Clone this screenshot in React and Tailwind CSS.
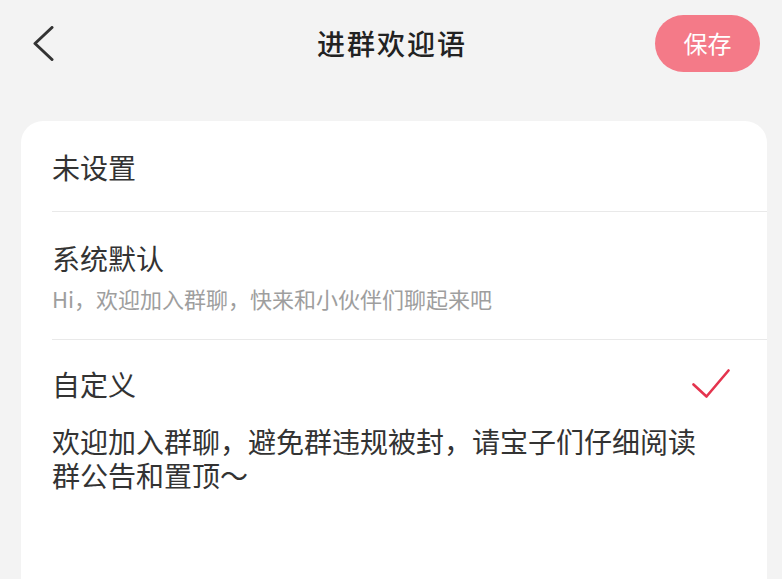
import React from "react";

function App() {
  const font = { fontFamily: '"Noto Sans CJK SC", "Noto Sans", sans-serif' };

  return (
    <div
      className="w-[782px] h-[579px] overflow-hidden bg-[#f3f3f3] text-[#333333]"
      style={font}
    >
      {/* ---------- Header ---------- */}
      <div className="h-[86px] grid grid-cols-[1fr_auto_1fr] items-center">
        <div className="pl-[33px] flex items-center">
          <svg width="21" height="35" viewBox="0 0 21 35" fill="none">
            <polyline
              points="19,1.5 2,17.5 19,33.5"
              stroke="#333333"
              strokeWidth="3"
              strokeLinecap="round"
              strokeLinejoin="round"
            />
          </svg>
        </div>
        <h1 className="text-[28px] font-medium tracking-[2px] text-[#222222] leading-none pl-[2px]">
          进群欢迎语
        </h1>
        <div className="flex justify-end pr-[22px]">
          <button className="w-[105px] h-[57px] rounded-full bg-[#f47a88] text-white text-[24px] leading-none">
            保存
          </button>
        </div>
      </div>

      {/* ---------- Card ---------- */}
      <div className="mt-[35px] ml-[21px] mr-[15px] h-[480px] bg-white rounded-t-[22px]">
        <div className="ml-[31px] h-[91px] flex items-center border-b border-[#e9e9e9]">
          <p className="text-[28px] leading-[36px] pt-[2px]">未设置</p>
        </div>

        <div className="ml-[31px] pt-[28px] pb-[27px] border-b border-[#e9e9e9]">
          <p className="text-[28px] leading-[36px]">系统默认</p>
          <p className="mt-[8px] text-[22px] leading-[28px] text-[#9e9e9e]">
            Hi，欢迎加入群聊，快来和小伙伴们聊起来吧
          </p>
        </div>

        <div className="ml-[31px] pt-[26px]">
          <div className="flex items-center justify-between pr-[37px]">
            <p className="text-[28px] leading-[36px]">自定义</p>
            <svg width="38" height="30" viewBox="0 0 38 30" fill="none">
              <polyline
                points="1.5,15.5 14.5,27.5 36.5,1.5"
                stroke="#e4344e"
                strokeWidth="2.6"
                strokeLinecap="round"
                strokeLinejoin="round"
              />
            </svg>
          </div>
          <p className="mt-[22px] pr-[60px] text-[28px] leading-[34px]">
            欢迎加入群聊，避免群违规被封，请宝子们仔细阅读群公告和置顶～
          </p>
        </div>
      </div>
    </div>
  );
}

export default App;
